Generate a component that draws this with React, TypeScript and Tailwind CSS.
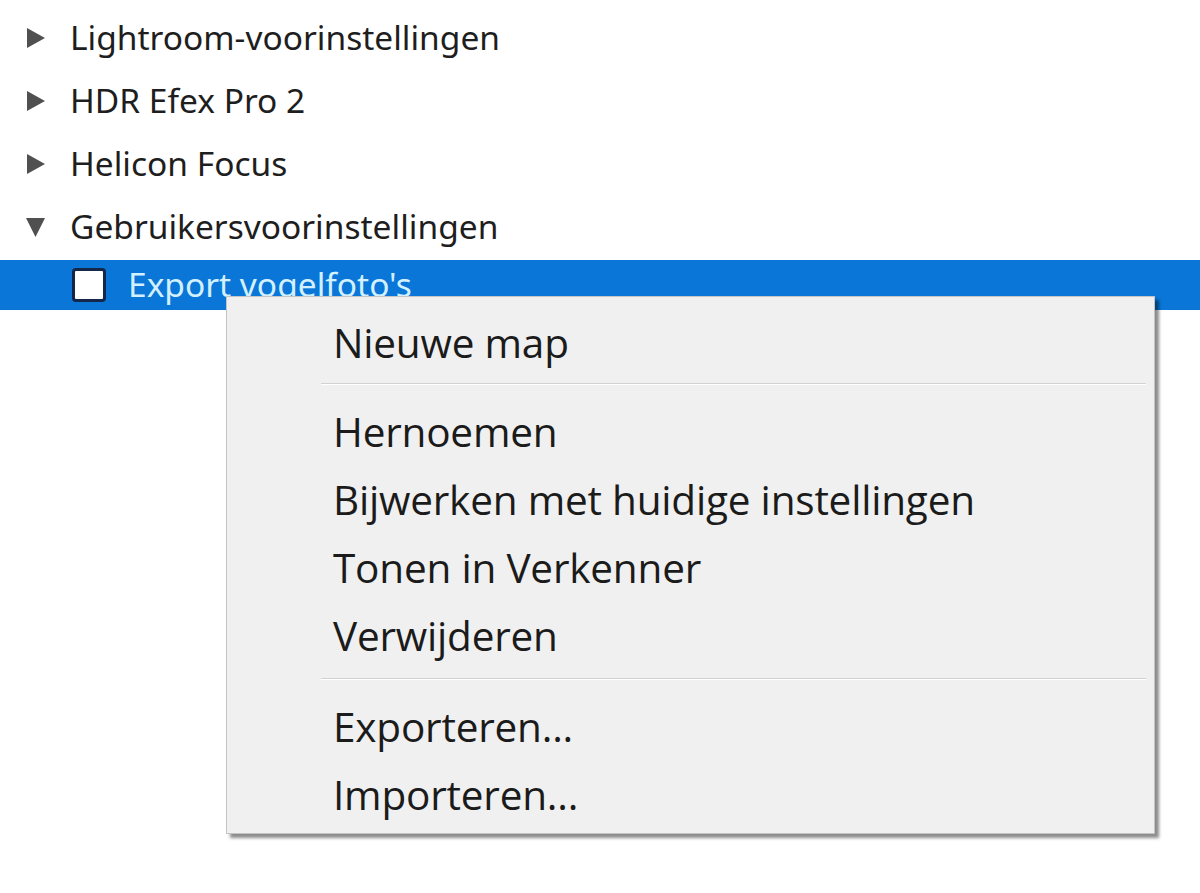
import React from "react";

const treeFont = { fontFamily: '"Noto Sans", "Open Sans", sans-serif' };
const menuFont = { fontFamily: '"Open Sans", "Noto Sans", sans-serif' };

const folders = [
  { label: "Lightroom-voorinstellingen", open: false },
  { label: "HDR Efex Pro 2", open: false },
  { label: "Helicon Focus", open: false },
  { label: "Gebruikersvoorinstellingen", open: true },
];

const Caret = ({ open }: { open: boolean }) =>
  open ? (
    <svg width="22" height="22" viewBox="0 0 22 22" className="shrink-0">
      <path d="M1 2 L20 2 L10.5 21 Z" fill="#505050" />
    </svg>
  ) : (
    <svg width="22" height="22" viewBox="0 0 22 22" className="shrink-0">
      <path d="M2 1 L20 11 L2 21 Z" fill="#505050" />
    </svg>
  );

const Separator = ({ top }: { top: string }) => (
  <div className={`${top} pb-[13px] pl-[94px] pr-[8px]`}>
    <div className="h-[2px] border-t border-[#d2d2d2] bg-white" />
  </div>
);

const MenuItem = ({ label }: { label: string }) => (
  <div className="h-[68px] flex items-center pl-[106px] text-[40.5px] text-[#1b1b1b] tracking-[-0.2px]">
    {label}
  </div>
);

export default function App() {
  return (
    <div className="relative w-[1200px] h-[893px] bg-white overflow-hidden" style={treeFont}>
      <div className="pt-[6px]">
        {folders.map((f) => (
          <div key={f.label} className="h-[63px] flex items-center pl-[25px] gap-[23px]">
            <Caret open={f.open} />
            <span className="text-[33.5px] text-[#1e1e1e] leading-none">{f.label}</span>
          </div>
        ))}
        <div className="mt-[2px] h-[50px] bg-[#0a76d8] flex items-center pl-[72px] gap-[22px]">
          <div className="w-[34px] h-[34px] bg-white border-[3px] border-[#14264a] rounded-[4px] shrink-0" />
          <span className="text-[33.5px] text-[#d2f0ff] leading-none">Export vogelfoto's</span>
        </div>
      </div>

      <div
        className="absolute left-[226px] top-[296px] w-[929px] h-[538px] bg-[#f0f0f0] border border-[#c4c4c4] shadow-[4px_4px_3px_rgba(0,0,0,0.45)] pt-[12px]"
        style={menuFont}
      >
        <MenuItem label="Nieuwe map" />
        <Separator top="pt-[6px]" />
        <MenuItem label="Hernoemen" />
        <MenuItem label="Bijwerken met huidige instellingen" />
        <MenuItem label="Tonen in Verkenner" />
        <MenuItem label="Verwijderen" />
        <Separator top="pt-[8px]" />
        <MenuItem label="Exporteren..." />
        <MenuItem label="Importeren..." />
      </div>
    </div>
  );
}
